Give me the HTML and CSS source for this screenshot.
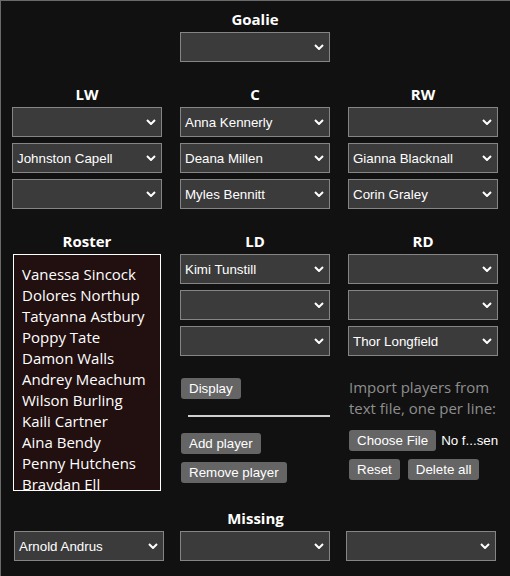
FILE: index.html
```html
<!DOCTYPE html>
<html lang="en">
<head>
<meta charset="utf-8">
<title>Lineup</title>
<link rel="stylesheet" href="styles.css">
</head>
<body>
<div class="page">
  <section class="goalie">
    <h2 class="title">Goalie</h2>
    <div class="sel"><span class="val"></span><svg class="chev" viewBox="0 0 10 6"><polyline points="1,1 5,5 9,1"/></svg></div>
  </section>

  <section class="grid3 lines">
    <div class="col">
      <h2 class="title">LW</h2>
      <div class="sel"><span class="val"></span><svg class="chev" viewBox="0 0 10 6"><polyline points="1,1 5,5 9,1"/></svg></div>
      <div class="sel"><span class="val">Johnston Capell</span><svg class="chev" viewBox="0 0 10 6"><polyline points="1,1 5,5 9,1"/></svg></div>
      <div class="sel"><span class="val"></span><svg class="chev" viewBox="0 0 10 6"><polyline points="1,1 5,5 9,1"/></svg></div>
    </div>
    <div class="col">
      <h2 class="title">C</h2>
      <div class="sel"><span class="val">Anna Kennerly</span><svg class="chev" viewBox="0 0 10 6"><polyline points="1,1 5,5 9,1"/></svg></div>
      <div class="sel"><span class="val">Deana Millen</span><svg class="chev" viewBox="0 0 10 6"><polyline points="1,1 5,5 9,1"/></svg></div>
      <div class="sel"><span class="val">Myles Bennitt</span><svg class="chev" viewBox="0 0 10 6"><polyline points="1,1 5,5 9,1"/></svg></div>
    </div>
    <div class="col">
      <h2 class="title">RW</h2>
      <div class="sel"><span class="val"></span><svg class="chev" viewBox="0 0 10 6"><polyline points="1,1 5,5 9,1"/></svg></div>
      <div class="sel"><span class="val">Gianna Blacknall</span><svg class="chev" viewBox="0 0 10 6"><polyline points="1,1 5,5 9,1"/></svg></div>
      <div class="sel"><span class="val">Corin Graley</span><svg class="chev" viewBox="0 0 10 6"><polyline points="1,1 5,5 9,1"/></svg></div>
    </div>
  </section>

  <section class="grid3 lower">
    <div class="col">
      <h2 class="title">Roster</h2>
      <div class="roster">
        <div>Vanessa Sincock</div>
        <div>Dolores Northup</div>
        <div>Tatyanna Astbury</div>
        <div>Poppy Tate</div>
        <div>Damon Walls</div>
        <div>Andrey Meachum</div>
        <div>Wilson Burling</div>
        <div>Kaili Cartner</div>
        <div>Aina Bendy</div>
        <div>Penny Hutchens</div>
        <div>Braydan Ell</div>
      </div>
    </div>
    <div class="col">
      <h2 class="title">LD</h2>
      <div class="sel"><span class="val">Kimi Tunstill</span><svg class="chev" viewBox="0 0 10 6"><polyline points="1,1 5,5 9,1"/></svg></div>
      <div class="sel"><span class="val"></span><svg class="chev" viewBox="0 0 10 6"><polyline points="1,1 5,5 9,1"/></svg></div>
      <div class="sel"><span class="val"></span><svg class="chev" viewBox="0 0 10 6"><polyline points="1,1 5,5 9,1"/></svg></div>
      <div class="tools">
        <button class="btn">Display</button>
        <hr class="rule">
        <button class="btn">Add player</button>
        <button class="btn">Remove player</button>
      </div>
    </div>
    <div class="col">
      <h2 class="title">RD</h2>
      <div class="sel"><span class="val"></span><svg class="chev" viewBox="0 0 10 6"><polyline points="1,1 5,5 9,1"/></svg></div>
      <div class="sel"><span class="val"></span><svg class="chev" viewBox="0 0 10 6"><polyline points="1,1 5,5 9,1"/></svg></div>
      <div class="sel"><span class="val">Thor Longfield</span><svg class="chev" viewBox="0 0 10 6"><polyline points="1,1 5,5 9,1"/></svg></div>
      <div class="import">
        <p class="hint">Import players from text file, one per line:</p>
        <div class="file"><button class="btn">Choose File</button><span class="fname">No f...sen</span></div>
        <div class="btnrow"><button class="btn">Reset</button><button class="btn">Delete all</button></div>
      </div>
    </div>
  </section>

  <section class="missing">
    <h2 class="title">Missing</h2>
    <div class="mrow">
      <div class="sel"><span class="val">Arnold Andrus</span><svg class="chev" viewBox="0 0 10 6"><polyline points="1,1 5,5 9,1"/></svg></div>
      <div class="sel"><span class="val"></span><svg class="chev" viewBox="0 0 10 6"><polyline points="1,1 5,5 9,1"/></svg></div>
      <div class="sel"><span class="val"></span><svg class="chev" viewBox="0 0 10 6"><polyline points="1,1 5,5 9,1"/></svg></div>
    </div>
  </section>
</div>
</body>
</html>
```

FILE: styles.css
```css
html, body {
  margin: 0;
  padding: 0;
  background: #111111;
}

.page {
  box-sizing: border-box;
  width: 510px;
  height: 576px;
  border-top: 1px solid #6a6a6a;
  border-left: 1px solid #6a6a6a;
  padding-top: 8px;
  font-family: "Open Sans", "Liberation Sans", sans-serif;
  color: #ffffff;
  overflow: hidden;
}

.title {
  margin: 0 0 3px;
  font-size: 15px;
  line-height: 20px;
  font-weight: 700;
  text-align: center;
  color: #ffffff;
}

.goalie {
  display: flex;
  flex-direction: column;
  align-items: center;
  padding-right: 1px;
}

.sel {
  box-sizing: border-box;
  width: 150px;
  height: 30px;
  flex: none;
  background: #3b3b3b;
  border: 1px solid #858585;
  display: flex;
  align-items: center;
  justify-content: space-between;
  padding: 0 5px 0 4px;
  font-family: "Liberation Sans", Arial, sans-serif;
  font-size: 13.33px;
  color: #ffffff;
}

.chev {
  width: 10px;
  height: 6px;
  fill: none;
  stroke: #ffffff;
  stroke-width: 2;
}

.grid3 {
  display: grid;
  grid-template-columns: 150px 150px 150px;
  column-gap: 18px;
  padding-left: 11px;
}

.col {
  display: flex;
  flex-direction: column;
  gap: 6px;
}

.col .title {
  margin-bottom: -3px;
}

.lines {
  margin-top: 22px;
}

.lower {
  margin-top: 22px;
}

.roster {
  box-sizing: border-box;
  width: 148px;
  height: 237px;
  margin-left: 1px;
  background: #221010;
  border: 1px solid #ffffff;
  padding: 9px 8px;
  overflow: hidden;
  font-size: 15px;
  line-height: 21px;
  white-space: nowrap;
}

.btn {
  box-sizing: border-box;
  height: 21px;
  padding: 0 8px;
  border: none;
  border-radius: 3px;
  background: #656565;
  color: #ffffff;
  font-family: "Liberation Sans", Arial, sans-serif;
  font-size: 13.33px;
  line-height: 21px;
}

.tools {
  display: flex;
  flex-direction: column;
  align-items: flex-start;
  padding-left: 1px;
  margin-top: 16px;
}

.rule {
  width: 142px;
  height: 0;
  border: none;
  border-top: 2px solid #cfcfcf;
  margin: 16px 0 16px 7px;
}

.tools .btn + .btn {
  margin-top: 8px;
}

.import {
  margin-top: 15px;
  padding-left: 1px;
}

.hint {
  margin: 0;
  font-size: 15px;
  line-height: 21px;
  color: #8e8e8e;
}

.file {
  display: flex;
  align-items: center;
  margin-top: 11px;
  white-space: nowrap;
}

.fname {
  margin-left: 5px;
  font-family: "Liberation Sans", Arial, sans-serif;
  font-size: 13.33px;
  color: #ffffff;
}

.btnrow {
  display: flex;
  gap: 8px;
  margin-top: 8px;
}

.missing {
  margin-top: 17px;
}

.mrow {
  display: flex;
  gap: 16px;
  padding-left: 13px;
}
```
